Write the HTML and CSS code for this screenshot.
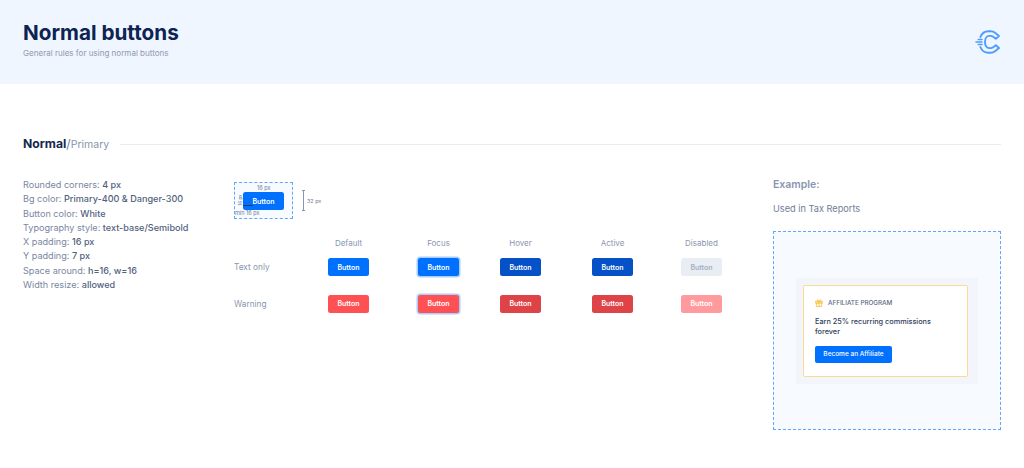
FILE: index.html
```html
<!DOCTYPE html>
<html lang="en">
<head>
<meta charset="utf-8">
<title>Normal buttons</title>
<link rel="stylesheet" href="styles.css">
</head>
<body>
<header class="hero">
  <div>
    <h1 class="hero-title">Normal buttons</h1>
    <p class="hero-sub">General rules for using normal buttons</p>
  </div>
  <svg class="logo" viewBox="0 0 26 24" width="26" height="24" fill="none" stroke="#4d9cff" stroke-width="1.9" stroke-linecap="round" stroke-linejoin="round">
    <path d="M5.4 7 C6.8 3.4 9.8 1.2 13.5 1.2 H15.8 C17.4 1.2 18.8 1.7 20 2.7 L24 6 L20.8 8.8 L18.2 6.8 C17.4 6.2 16.6 5.9 15.6 5.9 H14.2 C11.6 5.9 10 8.6 10 12 C10 15.4 11.6 18.1 14.2 18.1 H15.6 C16.6 18.1 17.4 17.8 18.2 17.2 L20.8 15.2 L24 18 L20 21.3 C18.8 22.3 17.4 22.8 15.8 22.8 H13.5 C9.8 22.8 6.8 20.6 5.4 17"/>
    <path d="M1 12 H7 M3.2 9.4 H7 M3.2 14.6 H7" stroke-width="1.5"/>
  </svg>
</header>

<main class="content">
  <div class="section-head">
    <h2 class="section-title"><b>Normal</b><span class="slash">/</span><span class="section-kind">Primary</span></h2>
    <div class="section-rule"></div>
  </div>

  <div class="columns">
    <ul class="rules">
      <li>Rounded corners: <b>4 px</b></li>
      <li>Bg color: <b>Primary-400 &amp; Danger-300</b></li>
      <li>Button color: <b>White</b></li>
      <li>Typography style: <b>text-base/Semibold</b></li>
      <li>X padding: <b>16 px</b></li>
      <li>Y padding: <b>7 px</b></li>
      <li>Space around: <b>h=16, w=16</b></li>
      <li>Width resize: <b>allowed</b></li>
    </ul>

    <div class="specimens">
      <div class="anatomy-row">
        <div class="anatomy">
          <span class="dim dim-top">16 px</span>
          <span class="dim dim-side">16 px</span>
          <span class="btn btn-default">Button</span>
          <span class="min-line"></span>
          <span class="dim dim-min">min 16 px</span>
        </div>
        <div class="height-mark"></div>
        <span class="height-label">32 px</span>
      </div>

      <div class="states states-head">
        <span></span>
        <span class="state-head">Default</span>
        <span class="state-head">Focus</span>
        <span class="state-head">Hover</span>
        <span class="state-head">Active</span>
        <span class="state-head">Disabled</span>
      </div>

      <div class="states states-body">
        <span class="row-label">Text only</span>
        <span class="btn btn-default">Button</span>
        <span class="btn btn-default btn-focus">Button</span>
        <span class="btn btn-hover">Button</span>
        <span class="btn btn-hover">Button</span>
        <span class="btn btn-disabled">Button</span>

        <span class="row-label">Warning</span>
        <span class="btn btn-danger">Button</span>
        <span class="btn btn-danger btn-focus">Button</span>
        <span class="btn btn-danger-dark">Button</span>
        <span class="btn btn-danger-dark">Button</span>
        <span class="btn btn-danger-off">Button</span>
      </div>
    </div>

    <section class="example">
      <h3 class="example-title">Example:</h3>
      <p class="example-note">Used in Tax Reports</p>
      <div class="example-frame">
        <div class="card-halo">
          <div class="card">
            <div class="card-head">
              <svg class="gift" viewBox="0 0 12 12" width="8" height="8" fill="none" stroke="#f6c343" stroke-width="1.3">
                <rect x="1" y="3.5" width="10" height="2.5"/>
                <rect x="2" y="6" width="8" height="5"/>
                <path d="M6 3.5V11M6 3.5C4 3.5 3 2.8 3 1.8S5 .8 6 3.5C7 .8 9 .8 9 1.8S8 3.5 6 3.5Z"/>
              </svg>
              <span>AFFILIATE PROGRAM</span>
            </div>
            <p class="card-text">Earn 25% recurring commissions forever</p>
            <span class="card-btn">Become an Affiliate</span>
          </div>
        </div>
      </div>
    </section>
  </div>
</main>
</body>
</html>
```

FILE: styles.css
```css
* { box-sizing: border-box; }
html, body { margin: 0; padding: 0; }
body {
  width: 1024px;
  height: 468px;
  overflow: hidden;
  background: #fff;
  font-family: Inter, "Liberation Sans", sans-serif;
  color: #0d2352;
}
.hero {
  height: 84px;
  background: #f0f6ff;
  padding: 20px 23px 0;
  display: flex;
  justify-content: space-between;
  align-items: flex-start;
}
.hero-title {
  margin: 0;
  font-size: 20.7px;
  line-height: 26px;
  font-weight: 700;
  color: #0d2352;
}
.hero-sub {
  margin: 1px 0 0;
  font-size: 8.05px;
  line-height: 12px;
  color: #8e9ab2;
}
.logo { margin-top: 10px; }

.content { padding: 0 23px; }
.section-head {
  display: flex;
  align-items: center;
  gap: 11px;
  margin-top: 51px;
  height: 18px;
}
.section-title {
  margin: 0;
  font-size: 12.2px;
  line-height: 18px;
  font-weight: 400;
  white-space: nowrap;
}
.section-title b { font-weight: 700; color: #15294f; }
.slash { color: #6f7d98; }
.section-kind { font-size: 10.5px; color: #8a96ae; }
.section-rule { flex: 1; height: 1px; background: #e8ecf3; }

.columns {
  display: flex;
  margin-top: 25px;
}
.rules {
  list-style: none;
  margin: 0;
  padding: 0;
  width: 211px;
  font-size: 9.1px;
  line-height: 14.3px;
  color: #7a869f;
}
.rules b { font-weight: 500; color: #525f7d; }

.specimens { width: 539px; padding-top: 4px; }
.anatomy-row {
  display: flex;
  align-items: center;
  height: 37px;
}
.anatomy {
  position: relative;
  width: 59px;
  height: 37px;
  border: 1px dashed #5ea6ff;
  background: #f7faff;
  padding: 9px 0 0 8px;
}
.dim {
  position: absolute;
  font-size: 5.5px;
  line-height: 6px;
  color: #6f7d98;
  white-space: nowrap;
}
.dim-top { top: 2px; left: 22px; }
.dim-side { top: 14px; left: 0; font-size: 4.5px; transform: rotate(-90deg); }
.dim-min { top: 27px; left: 0; }
.min-line { position: absolute; left: 8px; top: 22px; width: 10px; height: 1px; background: #1d3a70; }
.height-mark {
  width: 3px;
  height: 21px;
  margin-left: 9px;
  border-top: 1px solid #8a96ae;
  border-bottom: 1px solid #8a96ae;
  background: linear-gradient(#8a96ae, #8a96ae) center / 1px 100% no-repeat;
}
.height-label { margin-left: 2px; font-size: 5.4px; color: #6f7d98; }

.states {
  display: grid;
  grid-template-columns: 94px 90px 82px 92px 89px 41px;
  align-items: center;
}
.states-head { margin-top: 17px; height: 14px; }
.states-body { margin-top: 8px; grid-auto-rows: 18px; row-gap: 18.5px; }
.state-head {
  width: 41px;
  display: flex;
  justify-content: center;
  white-space: nowrap;
  font-size: 8px;
  color: #8a96ae;
}
.row-label { font-size: 8.3px; color: #8a96ae; }
.btn {
  display: flex;
  align-items: center;
  justify-content: center;
  width: 41px;
  height: 18px;
  border-radius: 2.5px;
  font-size: 7px;
  font-weight: 600;
  color: #fff;
}
.btn-default { background: #0070ff; }
.btn-focus { box-shadow: 0 0 0 1.5px #a8cdff; }
.btn-hover { background: #0650c8; }
.btn-disabled { background: #e9edf4; color: #a6b0c4; }
.btn-danger { background: #ff5054; }
.btn-danger-dark { background: #dd4347; }
.btn-danger-off { background: #ff9b9e; }

.example { width: 228px; }
.example-title {
  margin: 0;
  font-size: 10.5px;
  line-height: 14px;
  font-weight: 600;
  color: #8a96ae;
}
.example-note {
  margin: 10px 0 0;
  font-size: 9.2px;
  line-height: 14px;
  color: #6f7d98;
}
.example-frame {
  margin-top: 15px;
  width: 228px;
  height: 199px;
  border: 1px dashed #5ea6ff;
  background: #f7faff;
  display: flex;
  align-items: center;
  justify-content: center;
}
.card-halo {
  padding: 7px 10px 7px 7px;
  background: #f2f5fb;
}
.card {
  width: 165px;
  height: 92px;
  background: #fff;
  border: 1px solid #fbdc8e;
  border-radius: 2px;
  padding: 12px 11px;
}
.card-head {
  display: flex;
  align-items: center;
  gap: 5px;
  font-size: 6.3px;
  font-weight: 500;
  line-height: 10px;
  color: #5c6984;
}
.card-text {
  margin: 9px 0 0;
  font-size: 7.3px;
  line-height: 10.5px;
  font-weight: 500;
  color: #2f3d5c;
}
.card-btn {
  display: flex;
  align-items: center;
  justify-content: center;
  width: 77px;
  height: 17px;
  margin-top: 8px;
  border-radius: 2px;
  background: #0070ff;
  color: #fff;
  font-size: 6.5px;
  font-weight: 500;
}
```
